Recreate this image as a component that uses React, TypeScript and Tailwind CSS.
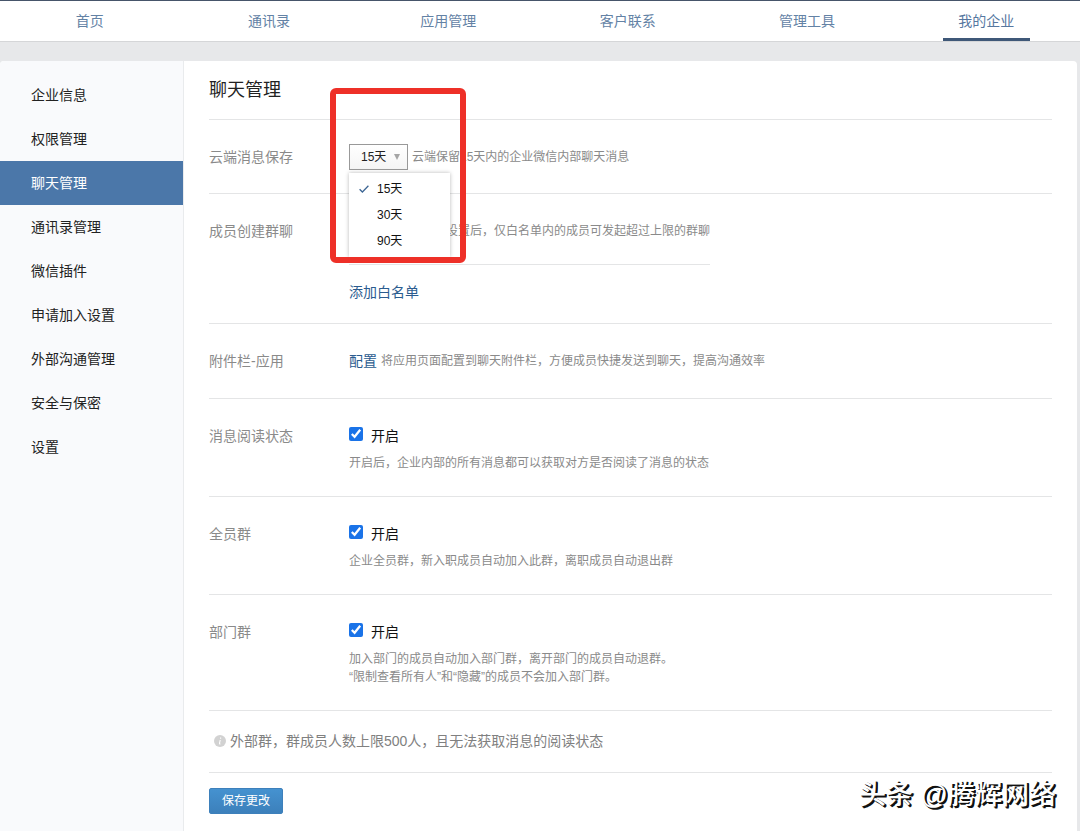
import { useState, type ReactNode } from "react";

const navItems = ["首页", "通讯录", "应用管理", "客户联系", "管理工具", "我的企业"];

const sideItems = [
  "企业信息",
  "权限管理",
  "聊天管理",
  "通讯录管理",
  "微信插件",
  "申请加入设置",
  "外部沟通管理",
  "安全与保密",
  "设置",
];

const periods = ["15天", "30天", "90天"];

function Row({ label, children }: { label: string; children: ReactNode }) {
  return (
    <section className="flex border-b border-[#e4e5e6] pt-[27px]">
      <h2 className="w-[140px] shrink-0 text-sm leading-5 text-[#8a8a8a]">{label}</h2>
      <div className="min-w-0 flex-1">{children}</div>
    </section>
  );
}

function ToggleRow({ label, lines }: { label: string; lines: string[] }) {
  return (
    <Row label={label}>
      <label className="flex items-start text-sm leading-5 text-[#111]">
        <input type="checkbox" defaultChecked className="mt-px mr-2 size-3.5 accent-[#1a73e8]" />
        开启
      </label>
      <div className="pt-2 pb-6 text-xs leading-[18px] text-[#8a8a8a]">
        {lines.map((line) => (
          <p key={line}>{line}</p>
        ))}
      </div>
    </Row>
  );
}

function PeriodPicker() {
  const [value, setValue] = useState("15天");
  return (
    <div className="relative -my-[3px] shrink-0">
      <select
        aria-label="云端消息保存时长"
        value={value}
        onChange={(e) => setValue(e.target.value)}
        className="block h-[26px] w-[59px] appearance-none border border-[#999] bg-linear-to-b from-white to-[#f5f5f5] pl-[11px] text-xs text-[#222]"
      >
        {periods.map((p) => (
          <option key={p}>{p}</option>
        ))}
      </select>
      <svg viewBox="0 0 6 6" className="pointer-events-none absolute top-2.5 right-2 size-1.5" aria-hidden="true">
        <path d="M0 0h6L3 6z" fill="#a5a5a5" />
      </svg>
      <ul className="absolute top-[29px] left-0 z-10 w-[101px] bg-white py-[3px] shadow-[0_0_4px_rgba(0,0,0,0.28)]">
        {periods.map((p) => (
          <li key={p}>
            <button
              type="button"
              onClick={() => setValue(p)}
              className="flex h-[26px] w-full items-center pl-2.5 text-xs text-[#111]"
            >
              <span className="w-[18px]">
                {p === value && (
                  <svg viewBox="0 0 10 8" className="h-2 w-2.5" fill="none" aria-hidden="true">
                    <path d="M0.6 4.2 3.4 7 9.4 0.8" stroke="#3d6694" strokeWidth="1.3" />
                  </svg>
                )}
              </span>
              {p}
            </button>
          </li>
        ))}
      </ul>
      <div className="pointer-events-none absolute -top-14 -left-[19px] z-20 h-[175px] w-[136px] rounded-md border-6 border-[#ee3028]" />
    </div>
  );
}

export default function App() {
  return (
    <div className="flex min-h-screen flex-col bg-[#e7e8ea] font-['Liberation_Sans','Noto_Sans_CJK_SC',sans-serif]">
      <header className="border-t border-b border-t-[#46556a] border-b-[#d5d6d8] bg-white pr-1">
        <nav className="grid h-10 grid-cols-6">
          {navItems.map((item) => (
            <a
              key={item}
              href="#"
              className={
                item === "我的企业"
                  ? "flex w-[87px] items-center justify-center justify-self-center border-b-3 border-[#3f5878] pt-[3px] text-sm text-[#56779f]"
                  : "flex items-center justify-center text-sm text-[#6382a5]"
              }
            >
              {item}
            </a>
          ))}
        </nav>
      </header>

      <div className="mt-[19px] mr-[3px] flex flex-1 rounded-t bg-white">
        <aside className="w-[184px] shrink-0 rounded-tl border-r border-[#e9ebed] bg-[#f9fafc] pt-3">
          {sideItems.map((item) => (
            <a
              key={item}
              href="#"
              className={
                item === "聊天管理"
                  ? "flex h-11 items-center bg-[#4b77a9] pl-[31px] text-sm text-white"
                  : "flex h-11 items-center pl-[31px] text-sm text-[#222]"
              }
            >
              {item}
            </a>
          ))}
        </aside>

        <main className="min-w-0 flex-1 pr-[25px] pl-[25px]">
          <h1 className="border-b border-[#e4e5e6] py-[17px] text-lg leading-6 text-[#222]">聊天管理</h1>

          <Row label="云端消息保存">
            <div className="flex items-center gap-1 pb-[26px] text-xs leading-5 text-[#8a8a8a]">
              <PeriodPicker />
              <span>云端保留15天内的企业微信内部聊天消息</span>
            </div>
          </Row>

          <Row label="成员创建群聊">
            <p className="w-fit border-b border-[#e4e5e6] pb-[23px] pl-[97px] text-xs leading-5 text-[#8a8a8a]">
              设置后，仅白名单内的成员可发起超过上限的群聊
            </p>
            <div className="pt-[17px] pb-[21px] text-sm leading-5">
              <a href="#" className="text-[#2b5c8f]">
                添加白名单
              </a>
            </div>
          </Row>

          <Row label="附件栏-应用">
            <div className="flex items-center gap-1 pb-[27px] text-xs leading-5 text-[#8a8a8a]">
              <a href="#" className="text-sm leading-5 text-[#2b5c8f]">
                配置
              </a>
              <span>将应用页面配置到聊天附件栏，方便成员快捷发送到聊天，提高沟通效率</span>
            </div>
          </Row>

          <ToggleRow label="消息阅读状态" lines={["开启后，企业内部的所有消息都可以获取对方是否阅读了消息的状态"]} />
          <ToggleRow label="全员群" lines={["企业全员群，新入职成员自动加入此群，离职成员自动退出群"]} />
          <ToggleRow
            label="部门群"
            lines={["加入部门的成员自动加入部门群，离开部门的成员自动退群。", "“限制查看所有人”和“隐藏”的成员不会加入部门群。"]}
          />

          <p className="flex items-center gap-1 border-b border-[#e4e5e6] pt-5 pb-[21px] pl-[5px] text-sm leading-5 text-[#808080]">
            <svg viewBox="0 0 12 12" className="size-3" aria-hidden="true">
              <circle cx="6" cy="6" r="6" fill="#d2d2d2" />
              <path d="M6.6 2.6v1.2M6.2 5 5.5 8.4q-.1.8.9.4" stroke="#fff" strokeWidth="1.1" fill="none" />
            </svg>
            外部群，群成员人数上限500人，且无法获取消息的阅读状态
          </p>

          <div className="relative pt-[15px] pb-4">
            <button
              type="button"
              className="h-[26px] w-[74px] rounded-xs border border-[#3d80bb] bg-linear-to-b from-[#4592d0] to-[#3c80bb] text-xs text-white"
            >
              保存更改
            </button>
            <div className="pointer-events-none absolute top-1 -right-1 text-[27px] leading-9 font-medium whitespace-nowrap text-white [text-shadow:2px_1px_0_#111,1px_1px_0_#111,2px_2px_0_#111]">
              头条 @腾辉网络
            </div>
          </div>
        </main>
      </div>
    </div>
  );
}
